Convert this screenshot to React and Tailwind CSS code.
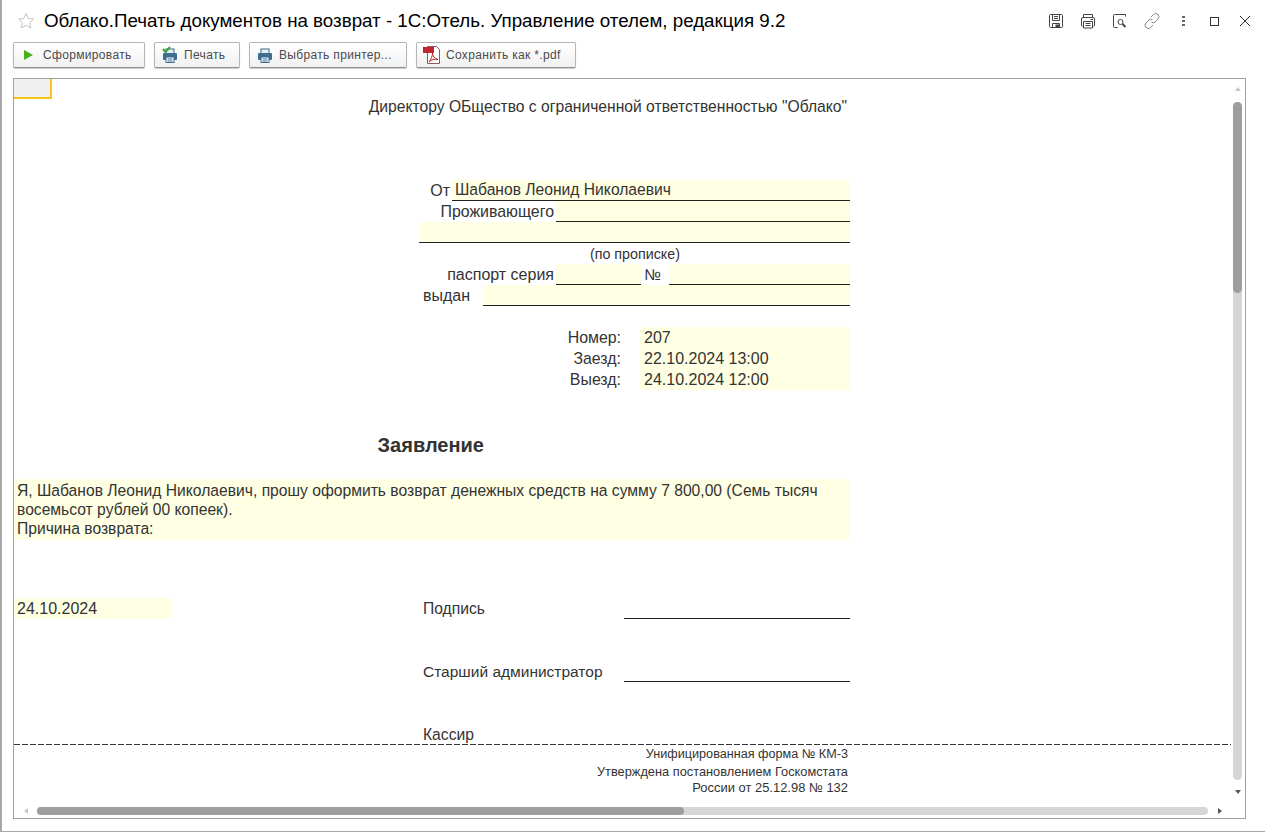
import React from 'react';

const Save = () => (
  <svg width="16" height="16" viewBox="0 0 16 16" fill="none" stroke="#444" strokeWidth="1">
    <path d="M1.500 2.500a1 1 0 0 1 1-1h11a1 1 0 0 1 1 1v11a1 1 0 0 1-1 1h-11a1 1 0 0 1-1-1z" />
    <path d="M4.500 1.500v6h7v-6M6 3.500h4M6 5.500h4M4.500 14.500v-4h7v4" />
    <rect x="7.500" y="11.500" width="4" height="3" fill="#444" stroke="none" />
  </svg>
);

const PrintOutline = () => (
  <svg width="16" height="16" viewBox="0 0 16 16" fill="none" stroke="#444" strokeWidth="1">
    <path d="M3.500 4.500v-3h9v3M2.500 13.500a1.500 1.500 0 0 1-1-1.500V6a1.500 1.500 0 0 1 1.500-1.500h10A1.500 1.500 0 0 1 14.500 6v6a1.500 1.500 0 0 1-1 1.500" />
    <path d="M3.500 8.500h9v6.500h-9zM5.500 10.500h5M5.500 12.500h5M10.500 6.500h2.500" />
  </svg>
);

const Preview = () => (
  <svg width="16" height="16" viewBox="0 0 16 16" fill="none" stroke="#444" strokeWidth="1">
    <path d="M13.500 3.500v-2h-11a1 1 0 0 0-1 1v11a1 1 0 0 0 1 1h3" />
    <circle cx="8.500" cy="9" r="2.500" />
    <path d="M10.500 11l3 3" strokeWidth="2" />
  </svg>
);

const LinkIcon = () => (
  <svg width="16" height="16" viewBox="0 0 16 16" fill="none" stroke="#888" strokeWidth="1">
    <path d="M7 4l2.500-2.500a2.500 2.500 0 0 1 4.500 4.500l-3 3a2.500 2.500 0 0 1-3.500 0" />
    <path d="M9 12l-2.500 2.500a2.500 2.500 0 0 1-4.500-4.500l3-3a2.500 2.500 0 0 1 3.500 0" />
  </svg>
);

const Printer = ({ check }) => (
  <svg width="18" height="18" viewBox="0 0 18 18">
    <rect x="5" y="3" width="8" height="5" fill="#e8eef4" stroke="#3f6d90" />
    <rect x="2" y="7" width="14" height="7" rx="1" fill="#3f6d90" />
    <rect x="5" y="11" width="8" height="5.500" fill="#fff" stroke="#3f6d90" />
    <path d="M6.500 13h5M6.500 15h5" stroke="#3f6d90" />
    {check && <path d="M2 3l2.500 3L9 1" fill="none" stroke="#3aa52a" strokeWidth="2" />}
  </svg>
);

const Pdf = () => (
  <svg width="20" height="20" viewBox="0 0 20 20">
    <path d="M5.500 1.500h9l3 3v14h-12z" fill="#fff" stroke="#8c5a5a" />
    <rect x="1" y="2" width="11" height="6" fill="#c0272d" />
    <path d="M7 17c2-2.500 3.500-6 3.500-9 0 3 2 5.500 5.500 6.500-3.500-.500-7 0-9 2.500z" fill="none" stroke="#c0272d" />
  </svg>
);

const Btn = ({ icon, label, w }) => (
  <button className={`${w} h-[26px] flex items-center rounded-[2px] border border-[#b4b4b4] border-b-[#8f8f8f] bg-gradient-to-b from-white to-[#f1f1f1] shadow-[0_1px_1px_rgba(0,0,0,0.2)] text-[12px] text-[#4a4a4a] tracking-[0.33px]`}>
    {icon}
    {label}
  </button>
);

const Row = ({ h = 'h-[21px]', children, className = '' }) => (
  <div className={`flex ${h} ${className}`}>{children}</div>
);

const Line = ({ w, text }) => (
  <div className={`${w} h-full bg-[#ffffe3] border-b border-[#222] pl-[3px] leading-[20px]`}>{text}</div>
);

export default function App() {
  return (
    <div className="w-[1265px] h-[832px] bg-white border-l-2 border-b border-[#a8a8a8] overflow-hidden flex flex-col font-['Liberation_Sans',Arial,sans-serif]">
      <header className="h-[42px] flex items-center shrink-0">
        <span className="w-[18px] ml-[15px]">
          <svg width="18" height="18" viewBox="0 0 18 18" fill="none" stroke="#c4c4c4">
            <path d="M9 1.500l2.300 5 5.200.600-3.900 3.500 1.100 5.400L9 13.300 4.300 16l1.100-5.400L1.500 7.100l5.200-.600z" />
          </svg>
        </span>
        <h1 className="ml-[9px] text-[18.750px] text-black whitespace-nowrap">Облако.Печать документов на возврат - 1С:Отель. Управление отелем, редакция 9.2</h1>
        <div className="ml-auto flex items-center mr-[14px] gap-[16px]">
          <Save />
          <PrintOutline />
          <Preview />
          <LinkIcon />
          <div className="flex flex-col gap-[2px] ml-[6px] mr-[3px]">
            <span className="w-[3px] h-[2px] bg-[#666]" />
            <span className="w-[3px] h-[2px] bg-[#666]" />
            <span className="w-[3px] h-[2px] bg-[#666]" />
          </div>
          <div className="w-[9px] h-[9px] border border-[#333] ml-[6px]" />
          <svg className="ml-[4px]" width="12" height="12" viewBox="0 0 12 12" stroke="#333">
            <path d="M1 1l10 10M11 1L1 11" />
          </svg>
        </div>
      </header>

      <div className="flex h-[26px] shrink-0 ml-[11px] gap-[9px]">
        <Btn w="w-[132px]" icon={<span className="ml-[10px] mr-[10px] w-0 h-0 border-y-[5px] border-y-transparent border-l-[9px] border-l-[#4cae1c]" />} label="Сформировать" />
        <Btn w="w-[86px]" icon={<span className="ml-[6px] mr-[5px]"><Printer check /></span>} label="Печать" />
        <Btn w="w-[158px]" icon={<span className="ml-[6px] mr-[5px]"><Printer /></span>} label="Выбрать принтер..." />
        <Btn w="w-[160px]" icon={<span className="ml-[5px] mr-[4px]"><Pdf /></span>} label="Сохранить как *.pdf" />
      </div>

      <main className="relative mt-[10px] ml-[11px] w-[1233px] h-[741px] border border-[#a0a0a0] overflow-hidden text-[15.650px] leading-[21px] text-[#333]">
        <div className="w-[38px] h-[20px] bg-[#f0f0f0] border-r-2 border-b-2 border-[#f5c518]" />

        <div className="w-[836px] flex flex-col">
          <Row className="-mt-[3px] justify-end pr-[3px]">Директору ОБщество с ограниченной ответственностью "Облако"</Row>

          <Row className="mt-[63px] justify-end">
            <span className="mr-[2px] text-[16px]">От</span>
            <Line w="w-[398px]" text="Шабанов Леонид Николаевич" />
          </Row>
          <Row className="justify-end">
            <span className="mr-[2px] text-[15.900px]">Проживающего</span>
            <Line w="w-[294px]" />
          </Row>
          <Row className="justify-end">
            <Line w="w-[431px]" />
          </Row>
          <Row className="text-[14.300px] leading-[23px] justify-end pr-[170px]">(по прописке)</Row>
          <Row className="justify-end">
            <span className="mr-[2px] text-[16px]">паспорт серия</span>
            <Line w="w-[85px]" />
            <span className="w-[28px] pl-[3px]">№</span>
            <Line w="w-[181px]" />
          </Row>
          <Row className="justify-end">
            <span className="w-[64px] pl-[4px] text-[16px]">выдан</span>
            <Line w="w-[367px]" />
          </Row>

          <div className="mt-[21px] flex flex-col">
            {[['Номер:', '207'], ['Заезд:', '22.10.2024 13:00'], ['Выезд:', '24.10.2024 12:00']].map(([a, b]) => (
              <Row key={a} className="justify-end">
                <span className="mr-[19px] text-[15.900px]">{a}</span>
                <div className="w-[210px] bg-[#ffffe3] pl-[4px] text-[16px]">{b}</div>
              </Row>
            ))}
          </div>

          <div className="mt-[42px] h-[26px] flex justify-end pr-[366px] text-[20px] font-bold leading-[26px]">Заявление</div>

          <div className="mt-[21px] h-[61px] bg-[#ffffe3] pl-[3px] pt-[2px] leading-[19px]">
            Я, Шабанов Леонид Николаевич, прошу оформить возврат денежных средств на сумму 7 800,00 (Семь тысяч
            <br />
            восемьсот рублей 00 копеек).
            <br />
            Причина возврата:
          </div>

          <Row className="mt-[58px]">
            <div className="w-[158px] bg-[#ffffe3] pl-[3px] text-[16px]">24.10.2024</div>
            <span className="ml-[251px] w-[201px]">Подпись</span>
            <div className="w-[226px] border-b border-[#222]" />
          </Row>
          <Row className="mt-[42px]">
            <span className="ml-[409px] w-[201px] text-[15.500px]">Старший администратор</span>
            <div className="w-[226px] border-b border-[#222]" />
          </Row>
          <Row className="mt-[42px]">
            <span className="ml-[409px]">Кассир</span>
          </Row>
        </div>

        <div className="w-[1217px] h-px mt-[-1px] bg-[repeating-linear-gradient(90deg,#333_0,#333_6px,transparent_6px,transparent_8px)]" />

        <div className="w-[834px] flex flex-col items-end text-[12.650px] leading-[16px]">
          <span className="h-[18px] leading-[18px]">Унифицированная форма № КМ-3</span>
          <span className="h-[17px] leading-[17px] text-[12.800px]">Утверждена постановлением Госкомстата</span>
          <span className="h-[16px] text-[12.950px]">России от 25.12.98 № 132</span>
        </div>

        {/* vertical scrollbar */}
        <div className="absolute left-[1219px] top-[23px] w-[9px] h-[678px] rounded-full bg-[#d6d6d6]">
          <div className="w-[9px] h-[191px] rounded-full bg-[#9e9e9e]" />
        </div>
        <span className="absolute left-[1221px] top-[8px] w-0 h-0 border-x-[3px] border-x-transparent border-b-[4px] border-b-[#c8c8c8]" />
        <span className="absolute left-[1221px] top-[711px] w-0 h-0 border-x-[3px] border-x-transparent border-t-[4px] border-t-[#555]" />

        {/* horizontal scrollbar */}
        <div className="absolute left-[23px] top-[728px] w-[1171px] h-[8px] rounded-full bg-[#d6d6d6]">
          <div className="w-[647px] h-[8px] rounded-full bg-[#9e9e9e]" />
        </div>
        <span className="absolute left-[10px] top-[729px] w-0 h-0 border-y-[3px] border-y-transparent border-r-[4px] border-r-[#c8c8c8]" />
        <span className="absolute left-[1204px] top-[729px] w-0 h-0 border-y-[3px] border-y-transparent border-l-[4px] border-l-[#555]" />
      </main>
    </div>
  );
}
